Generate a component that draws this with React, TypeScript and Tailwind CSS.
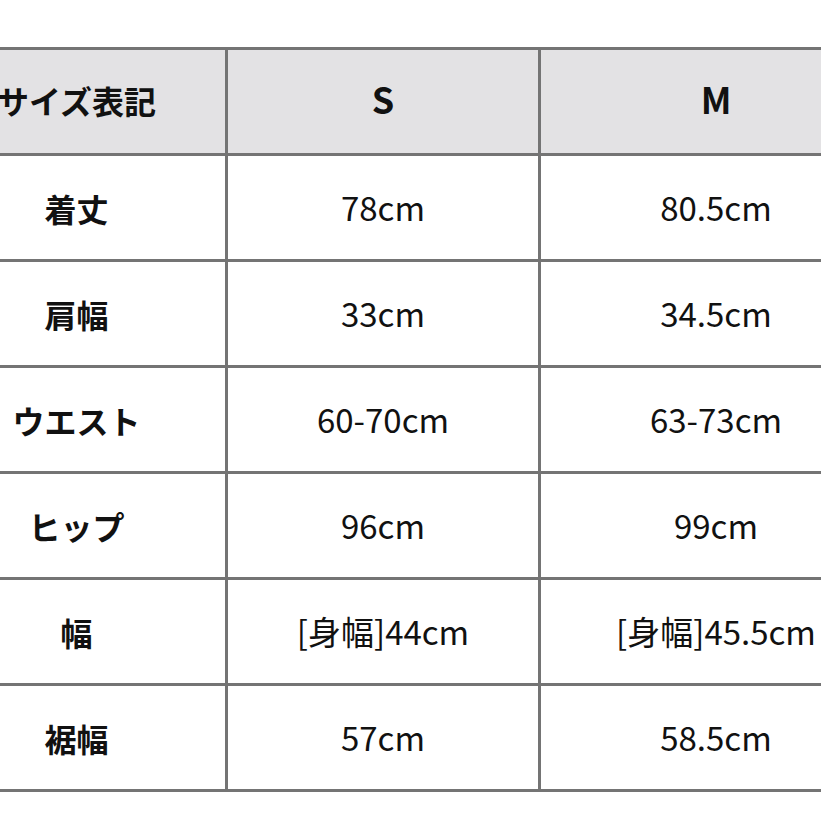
const rows: [string, string, string][] = [
  ["着丈", "78cm", "80.5cm"],
  ["肩幅", "33cm", "34.5cm"],
  ["ウエスト", "60-70cm", "63-73cm"],
  ["ヒップ", "96cm", "99cm"],
  ["幅", "[身幅]44cm", "[身幅]45.5cm"],
  ["裾幅", "57cm", "58.5cm"],
];

const cell = "flex items-center justify-center border-r-[3px] border-b-[3px] border-[#747474] whitespace-nowrap";

export default function App() {
  return (
    <div className="w-[821px] h-[821px] overflow-hidden bg-white font-['Noto_Sans_CJK_JP',sans-serif] text-[#111]">
      <div className="grid grid-cols-[300px_313px_353px] -ml-[72px] mt-[47px] border-t-[3px] border-[#747474]">
        <div className={`${cell} h-[106px] pb-[4px] bg-[#e3e2e4] text-[32px] font-bold`}>サイズ表記</div>
        <div className={`${cell} h-[106px] pb-[8px] bg-[#e3e2e4] text-[36px] font-bold`}>S</div>
        <div className={`${cell} h-[106px] pb-[8px] bg-[#e3e2e4] text-[36px] font-bold`}>M</div>
        {rows.map(([label, s, m]) => (
          <>
            <div key={label} className={`${cell} h-[106px] text-[32px] font-bold`}>{label}</div>
            <div className={`${cell} h-[106px] text-[33px]`}>{s}</div>
            <div className={`${cell} h-[106px] text-[33px]`}>{m}</div>
          </>
        ))}
      </div>
    </div>
  );
}
